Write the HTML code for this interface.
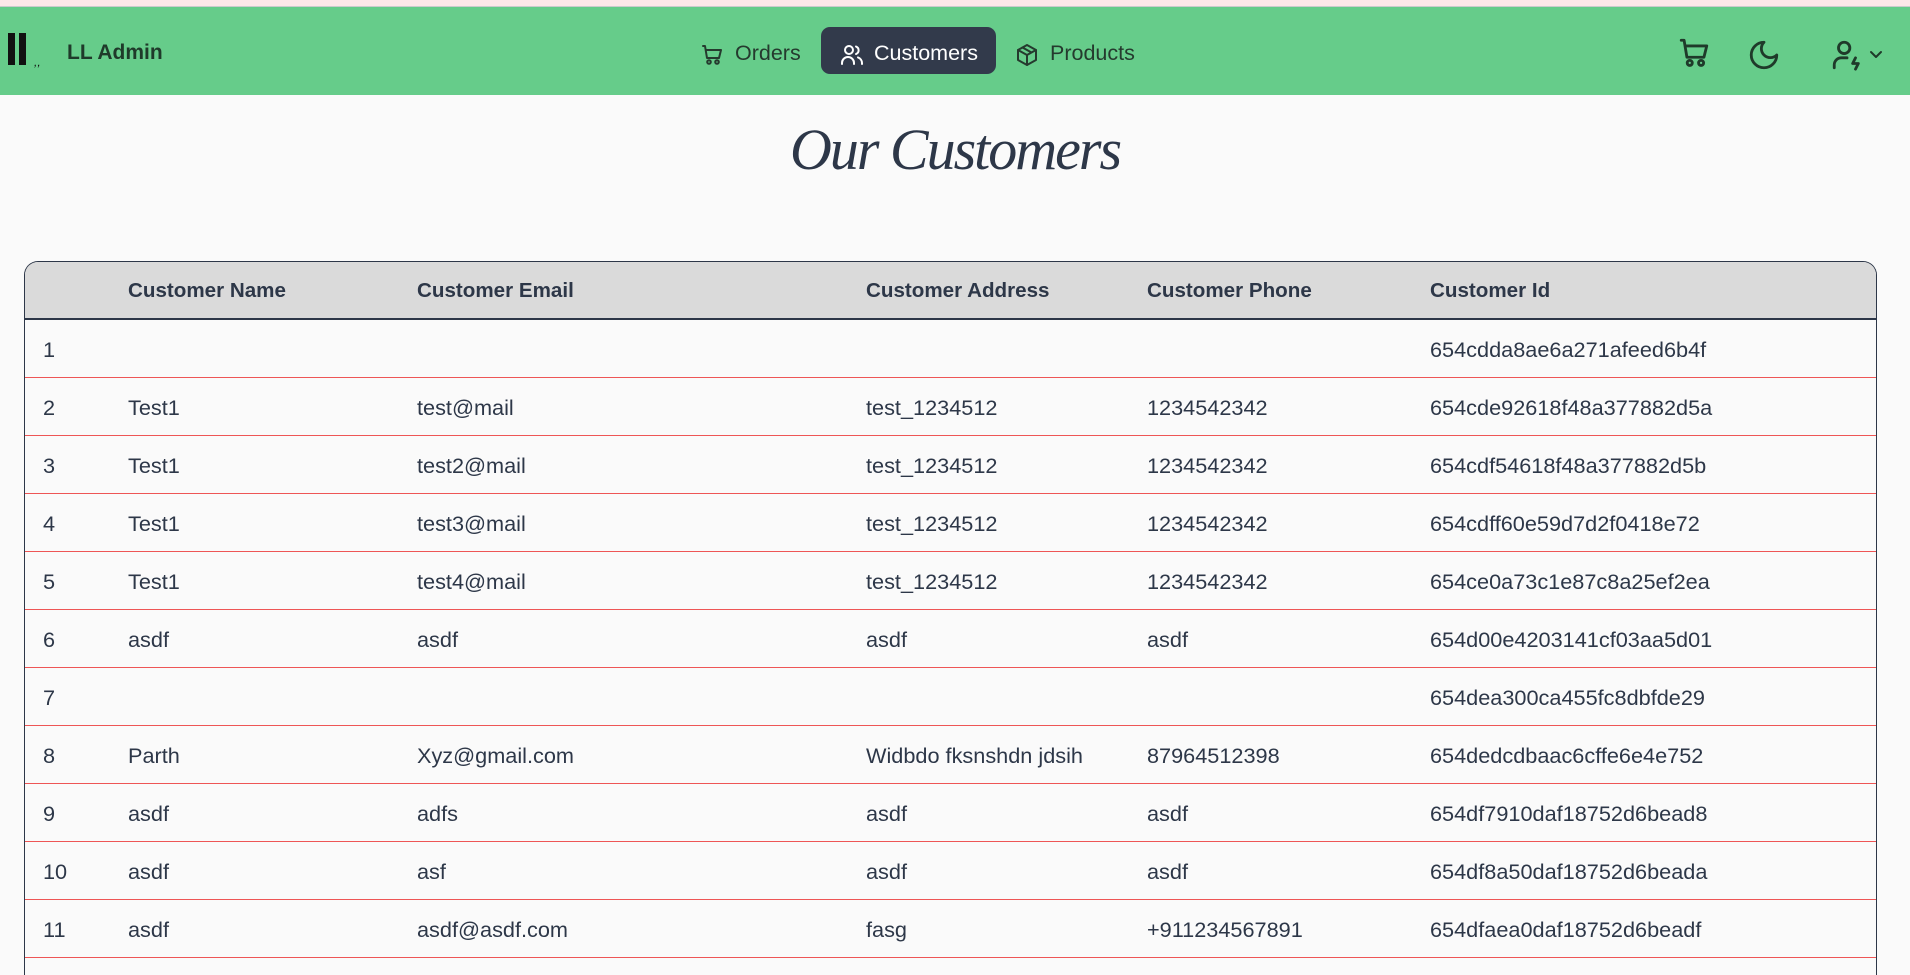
<!DOCTYPE html>
<html><head><meta charset="utf-8">
<style>
*{box-sizing:border-box;margin:0;padding:0}
html,body{width:1910px;height:975px;overflow:hidden}
body{background:#fafafa;font-family:"Liberation Sans",sans-serif;color:#2d3748;position:relative}
.top{position:absolute;left:0;top:0;width:1910px;height:7px;background:#fde8e8;border-bottom:1px solid #ccc}
.nav{position:absolute;left:0;top:7px;width:1910px;height:88px;background:#66cc8a}
.abs{position:absolute}
.navtxt{font-size:21.5px;color:#253a2e;top:34px}
.btn{position:absolute;left:821px;top:20px;width:175px;height:47px;background:#323a4b;border-radius:9px}
svg{position:absolute;fill:none;stroke-linecap:round;stroke-linejoin:round}
.title{position:absolute;left:0;width:1910px;top:116px;text-align:center;font-family:"Liberation Serif",serif;font-style:italic;font-size:58px;color:#2d3748;letter-spacing:-2px;font-weight:normal}
.tbl{position:absolute;left:24px;top:261px;width:1853px;border-left:1px solid #2d3748;border-right:1px solid #2d3748;border-top:1px solid #2d3748;border-radius:14px 14px 0 0;overflow:hidden}
.row{position:relative;height:58px;border-bottom:1px solid #e55;font-size:21.7px}
.row.h{background:#dadada;border-bottom:2px solid #2d3748;font-weight:bold;height:58px;font-size:20.6px}
.row span{position:absolute;top:17px;white-space:nowrap}
</style></head><body>
<div class="top"></div>
<div class="nav">
  <div class="abs" style="left:8px;top:26px;width:22px;height:32px;">
    <div class="abs" style="left:0;top:0;width:7px;height:32px;background:#111"></div>
    <div class="abs" style="left:11px;top:0;width:7px;height:32px;background:#111"></div>
  </div>
  <div class="abs" style="left:34px;top:48px;font-size:12px;color:#111;font-style:italic">,,</div>
  <div class="abs" style="left:67px;top:34px;font-size:21px;font-weight:bold;color:#1f3a2a">LL Admin</div>

  <svg style="left:700px;top:36px" width="24" height="24" viewBox="0 0 24 24" stroke="#253a2e" stroke-width="2"><path d="M3 3h2l2 12h12l2-8H6"/><circle cx="9" cy="19" r="1.8"/><circle cx="17" cy="19" r="1.8"/></svg>
  <div class="abs navtxt" style="left:735px">Orders</div>
  <div class="btn"></div>
  <svg style="left:840px;top:36px" width="24" height="24" viewBox="0 0 24 24" stroke="#fff" stroke-width="2"><circle cx="9" cy="7" r="4"/><path d="M2 21v-1a6 6 0 0 1 12 0v1"/><path d="M16 3.5a4 4 0 0 1 0 7.5M22 21v-1a6 6 0 0 0-4-5.6"/></svg>
  <div class="abs navtxt" style="left:874px;color:#fff">Customers</div>
  <svg style="left:1015px;top:36px" width="24" height="24" viewBox="0 0 24 24" stroke="#253a2e" stroke-width="2"><path d="M12 2l9 5v10l-9 5-9-5V7z"/><path d="M3 7l9 5 9-5M12 12v10M7.5 4.5l9 5"/></svg>
  <div class="abs navtxt" style="left:1050px">Products</div>

  <svg style="left:1677px;top:29px" width="34" height="34" viewBox="0 0 24 24" stroke="#1f3a2a" stroke-width="2"><path d="M3 3h2l2 12h12l2-8H6"/><circle cx="9" cy="19" r="1.8"/><circle cx="17" cy="19" r="1.8"/></svg>
  <svg style="left:1747px;top:31px" width="34" height="34" viewBox="0 0 24 24" stroke="#1f3a2a" stroke-width="2"><path d="M12 3a6 6 0 0 0 9 9 9 9 0 1 1-9-9z"/></svg>
  <svg style="left:1830px;top:31px" width="34" height="34" viewBox="0 0 24 24" stroke="#1f3a2a" stroke-width="2"><circle cx="10" cy="7" r="4"/><path d="M3 21v-2a5 5 0 0 1 5-5h4"/><path d="M18 14l-2 4h4l-2 4"/></svg>
  <svg style="left:1868px;top:42px" width="16" height="12" viewBox="0 0 16 12" stroke="#1f3a2a" stroke-width="2"><path d="M3 3l5 5 5-5"/></svg>
</div>

<div class="title">Our Customers</div>

<div class="tbl">
  <div class="row h"><span style="left:103px">Customer Name</span><span style="left:392px">Customer Email</span><span style="left:841px">Customer Address</span><span style="left:1122px">Customer Phone</span><span style="left:1405px">Customer Id</span></div>
  <div class="row"><span style="left:18px">1</span><span style="left:1405px">654cdda8ae6a271afeed6b4f</span></div>
  <div class="row"><span style="left:18px">2</span><span style="left:103px">Test1</span><span style="left:392px">test@mail</span><span style="left:841px">test_1234512</span><span style="left:1122px">1234542342</span><span style="left:1405px">654cde92618f48a377882d5a</span></div>
  <div class="row"><span style="left:18px">3</span><span style="left:103px">Test1</span><span style="left:392px">test2@mail</span><span style="left:841px">test_1234512</span><span style="left:1122px">1234542342</span><span style="left:1405px">654cdf54618f48a377882d5b</span></div>
  <div class="row"><span style="left:18px">4</span><span style="left:103px">Test1</span><span style="left:392px">test3@mail</span><span style="left:841px">test_1234512</span><span style="left:1122px">1234542342</span><span style="left:1405px">654cdff60e59d7d2f0418e72</span></div>
  <div class="row"><span style="left:18px">5</span><span style="left:103px">Test1</span><span style="left:392px">test4@mail</span><span style="left:841px">test_1234512</span><span style="left:1122px">1234542342</span><span style="left:1405px">654ce0a73c1e87c8a25ef2ea</span></div>
  <div class="row"><span style="left:18px">6</span><span style="left:103px">asdf</span><span style="left:392px">asdf</span><span style="left:841px">asdf</span><span style="left:1122px">asdf</span><span style="left:1405px">654d00e4203141cf03aa5d01</span></div>
  <div class="row"><span style="left:18px">7</span><span style="left:1405px">654dea300ca455fc8dbfde29</span></div>
  <div class="row"><span style="left:18px">8</span><span style="left:103px">Parth</span><span style="left:392px">Xyz@gmail.com</span><span style="left:841px">Widbdo fksnshdn jdsih</span><span style="left:1122px">87964512398</span><span style="left:1405px">654dedcdbaac6cffe6e4e752</span></div>
  <div class="row"><span style="left:18px">9</span><span style="left:103px">asdf</span><span style="left:392px">adfs</span><span style="left:841px">asdf</span><span style="left:1122px">asdf</span><span style="left:1405px">654df7910daf18752d6bead8</span></div>
  <div class="row"><span style="left:18px">10</span><span style="left:103px">asdf</span><span style="left:392px">asf</span><span style="left:841px">asdf</span><span style="left:1122px">asdf</span><span style="left:1405px">654df8a50daf18752d6beada</span></div>
  <div class="row"><span style="left:18px">11</span><span style="left:103px">asdf</span><span style="left:392px">asdf@asdf.com</span><span style="left:841px">fasg</span><span style="left:1122px">+911234567891</span><span style="left:1405px">654dfaea0daf18752d6beadf</span></div>
  <div class="row"></div>
</div>
</body></html>
